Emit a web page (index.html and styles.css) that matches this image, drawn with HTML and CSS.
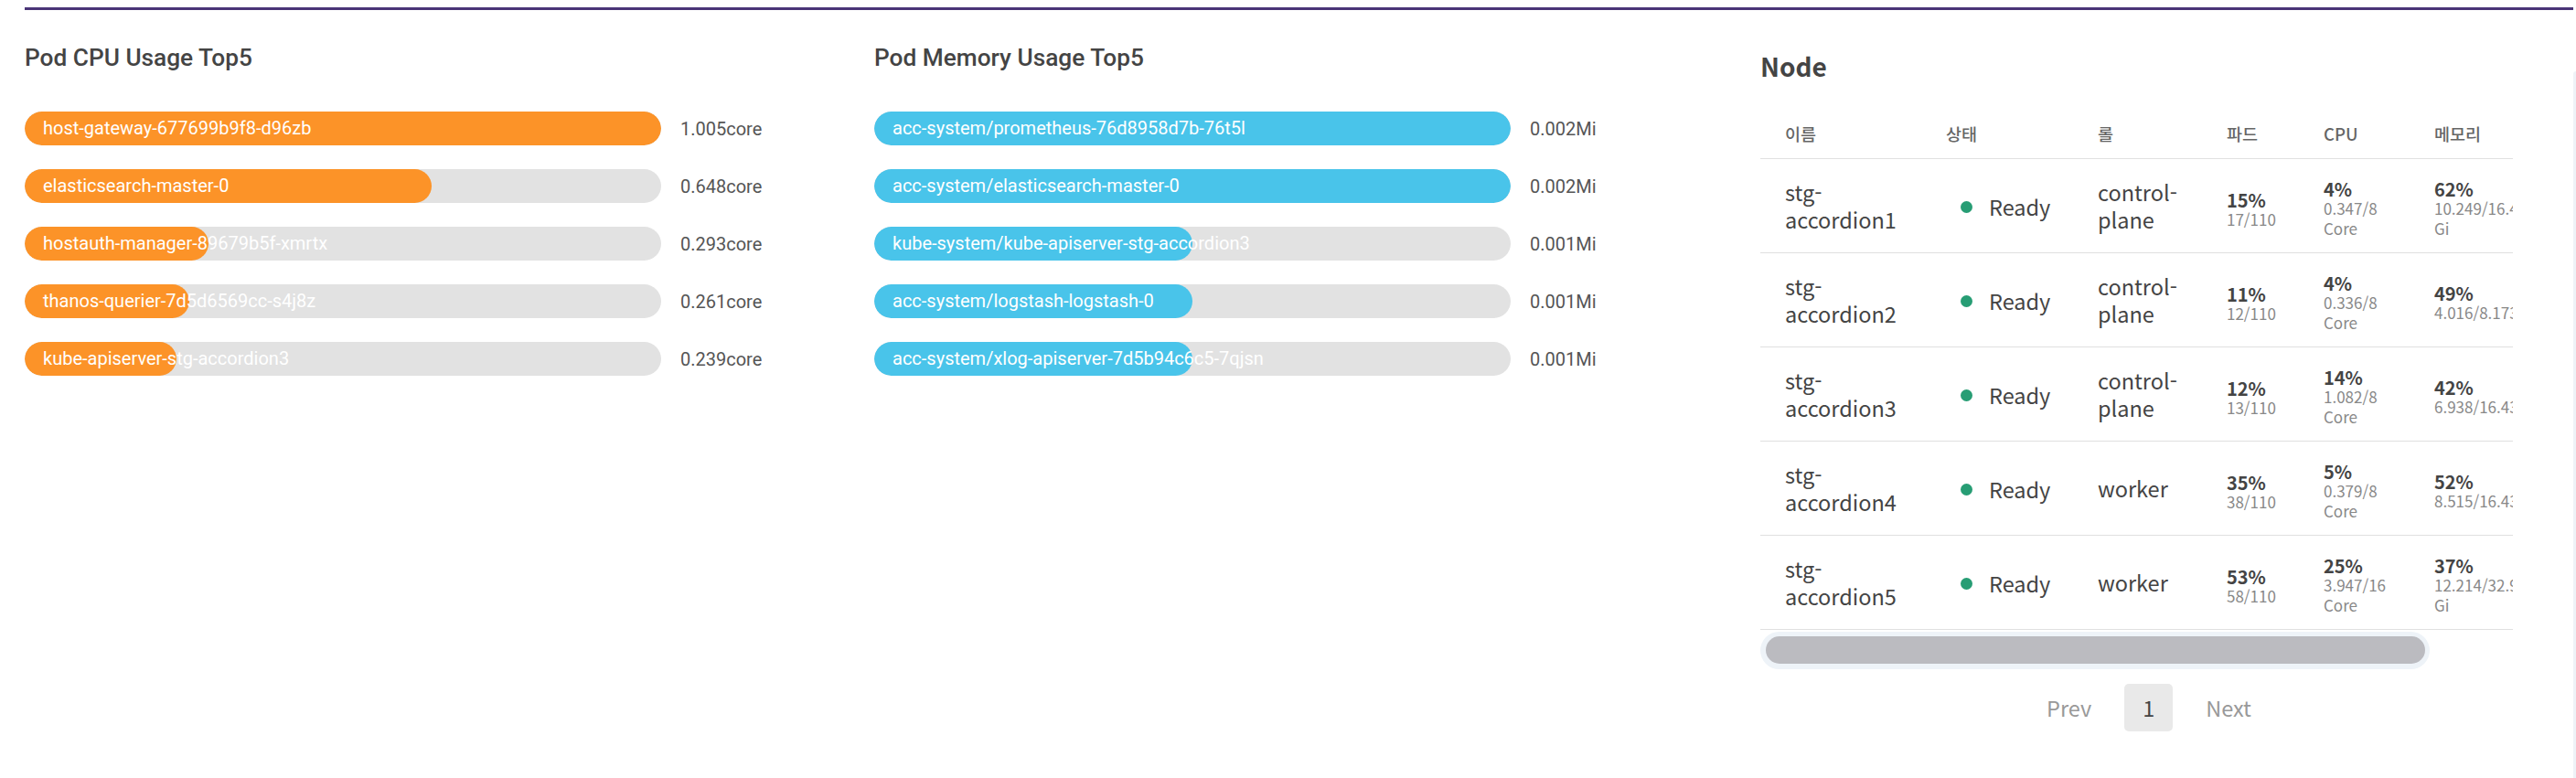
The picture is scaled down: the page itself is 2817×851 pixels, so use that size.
FILE: index.html
```html
<!DOCTYPE html>
<html lang="ko">
<head>
<meta charset="utf-8">
<title>Dashboard</title>
<link rel="stylesheet" href="styles.css">
</head>
<body>
<div class="page">
  <main class="main">
    <div class="topline"></div>
    <div class="grid">
      <section class="panel">
        <h2 class="title">Pod CPU Usage Top5</h2>
        <div class="bars">
          <div class="bar-row">
            <div class="track"><div class="fill cpu" style="width:100%"></div><span class="label">host-gateway-677699b9f8-d96zb</span></div>
            <span class="value">1.005core</span>
          </div>
          <div class="bar-row">
            <div class="track"><div class="fill cpu" style="width:64%"></div><span class="label">elasticsearch-master-0</span></div>
            <span class="value">0.648core</span>
          </div>
          <div class="bar-row">
            <div class="track"><div class="fill cpu" style="width:28.9%"></div><span class="label">hostauth-manager-89679b5f-xmrtx</span></div>
            <span class="value">0.293core</span>
          </div>
          <div class="bar-row">
            <div class="track"><div class="fill cpu" style="width:25.9%"></div><span class="label">thanos-querier-7d5d6569cc-s4j8z</span></div>
            <span class="value">0.261core</span>
          </div>
          <div class="bar-row">
            <div class="track"><div class="fill cpu" style="width:23.8%"></div><span class="label">kube-apiserver-stg-accordion3</span></div>
            <span class="value">0.239core</span>
          </div>
        </div>
      </section>

      <section class="panel">
        <h2 class="title">Pod Memory Usage Top5</h2>
        <div class="bars">
          <div class="bar-row">
            <div class="track"><div class="fill mem" style="width:100%"></div><span class="label">acc-system/prometheus-76d8958d7b-76t5l</span></div>
            <span class="value">0.002Mi</span>
          </div>
          <div class="bar-row">
            <div class="track"><div class="fill mem" style="width:100%"></div><span class="label">acc-system/elasticsearch-master-0</span></div>
            <span class="value">0.002Mi</span>
          </div>
          <div class="bar-row">
            <div class="track"><div class="fill mem" style="width:50%"></div><span class="label">kube-system/kube-apiserver-stg-accordion3</span></div>
            <span class="value">0.001Mi</span>
          </div>
          <div class="bar-row">
            <div class="track"><div class="fill mem" style="width:50%"></div><span class="label">acc-system/logstash-logstash-0</span></div>
            <span class="value">0.001Mi</span>
          </div>
          <div class="bar-row">
            <div class="track"><div class="fill mem" style="width:50%"></div><span class="label">acc-system/xlog-apiserver-7d5b94c6c5-7qjsn</span></div>
            <span class="value">0.001Mi</span>
          </div>
        </div>
      </section>

      <section class="node">
        <h2 class="node-title">Node</h2>
        <div class="table-view">
          <table class="node-table">
            <colgroup>
              <col class="c-name"><col class="c-status"><col class="c-role"><col class="c-pod"><col class="c-cpu"><col class="c-mem">
            </colgroup>
            <thead>
              <tr><th>이름</th><th>상태</th><th>롤</th><th>파드</th><th>CPU</th><th>메모리</th></tr>
            </thead>
            <tbody>
              <tr>
                <td>stg-accordion1</td>
                <td><span class="status"><i class="dot"></i>Ready</span></td>
                <td>control-plane</td>
                <td class="num pod"><div class="pct">15%</div><div class="sub">17/110</div></td>
                <td class="num"><div class="pct">4%</div><div class="sub">0.347/8 Core</div></td>
                <td class="num"><div class="pct">62%</div><div class="sub">10.249/16.43 Gi</div></td>
              </tr>
              <tr>
                <td>stg-accordion2</td>
                <td><span class="status"><i class="dot"></i>Ready</span></td>
                <td>control-plane</td>
                <td class="num pod"><div class="pct">11%</div><div class="sub">12/110</div></td>
                <td class="num"><div class="pct">4%</div><div class="sub">0.336/8 Core</div></td>
                <td class="num"><div class="pct">49%</div><div class="sub">4.016/8.173 Gi</div></td>
              </tr>
              <tr>
                <td>stg-accordion3</td>
                <td><span class="status"><i class="dot"></i>Ready</span></td>
                <td>control-plane</td>
                <td class="num pod"><div class="pct">12%</div><div class="sub">13/110</div></td>
                <td class="num"><div class="pct">14%</div><div class="sub">1.082/8 Core</div></td>
                <td class="num"><div class="pct">42%</div><div class="sub">6.938/16.43 Gi</div></td>
              </tr>
              <tr>
                <td>stg-accordion4</td>
                <td><span class="status"><i class="dot"></i>Ready</span></td>
                <td>worker</td>
                <td class="num pod"><div class="pct">35%</div><div class="sub">38/110</div></td>
                <td class="num"><div class="pct">5%</div><div class="sub">0.379/8 Core</div></td>
                <td class="num"><div class="pct">52%</div><div class="sub">8.515/16.43 Gi</div></td>
              </tr>
              <tr>
                <td>stg-accordion5</td>
                <td><span class="status"><i class="dot"></i>Ready</span></td>
                <td>worker</td>
                <td class="num pod"><div class="pct">53%</div><div class="sub">58/110</div></td>
                <td class="num"><div class="pct">25%</div><div class="sub">3.947/16 Core</div></td>
                <td class="num"><div class="pct">37%</div><div class="sub">12.214/32.93 Gi</div></td>
              </tr>
            </tbody>
          </table>
        </div>
        <div class="hscroll"><div class="thumb"></div></div>
        <nav class="pager">
          <span class="pg-link">Prev</span>
          <span class="pg-num">1</span>
          <span class="pg-link">Next</span>
        </nav>
      </section>
    </div>
  </main>
  <aside class="edge"></aside>
</div>
</body>
</html>
```

FILE: styles.css
```css
* { box-sizing: border-box; }
html, body { margin: 0; padding: 0; background: #fff; }
body { font-family: Roboto, "Liberation Sans", sans-serif; color: #444; }

.page {
  display: flex;
  width: 2817px;
  height: 851px;
  overflow: hidden;
}
.main {
  flex: 1;
  padding: 8px 0 0 27px;
  min-width: 0;
}
.edge {
  width: 3px;
  margin-top: 78px;
  background: #eef2f7;
  border-top-left-radius: 3px;
}
.topline {
  height: 3px;
  background: #4a3577;
}

.grid {
  display: grid;
  grid-template-columns: 929px 969px 1fr;
  align-items: start;
}

/* bar panels */
.title {
  margin: 36px 0 0 0;
  font-family: Roboto, sans-serif;
  font-size: 26.25px;
  line-height: 33px;
  font-weight: 500;
  color: #444;
}
.bars {
  margin-top: 42px;
  display: flex;
  flex-direction: column;
  gap: 26px;
}
.bar-row {
  display: flex;
  align-items: center;
  gap: 21px;
}
.track {
  width: 696px;
  height: 37px;
  display: grid;
  background: #e2e2e2;
  border-radius: 19px;
  overflow: hidden;
}
.fill, .label { grid-area: 1 / 1; }
.fill {
  height: 37px;
  border-radius: 19px;
}
.fill.cpu { background: #fc9328; }
.fill.mem { background: #49c4ea; }
.label {
  padding-left: 20px;
  line-height: 37px;
  font-size: 20px;
  color: #fff;
  white-space: nowrap;
}
.value {
  font-size: 20px;
  color: #555;
  white-space: nowrap;
}

/* node panel */
.node {
  width: 850px;
  font-family: "Noto Sans CJK KR", "Noto Sans", sans-serif;
}
.node-title {
  margin: 44px 0 0 0;
  font-size: 28px;
  line-height: 34px;
  font-weight: 700;
  color: #444;
}
.table-view {
  margin-top: 30px;
  width: 823px;
  overflow: hidden;
}
.node-table {
  border-collapse: collapse;
  table-layout: fixed;
  width: 850px;
}
.c-name { width: 176px; }
.c-status { width: 166px; }
.c-role { width: 141px; }
.c-pod { width: 106px; }
.c-cpu { width: 121px; }
.c-mem { width: 140px; }

.node-table th {
  height: 54px;
  padding: 0 0 0 27px;
  text-align: left;
  vertical-align: middle;
  font-size: 18.5px;
  font-weight: 500;
  color: #666;
  border-bottom: 1px solid #e0e0e0;
}
.node-table td {
  height: 103px;
  padding: 0 0 0 27px;
  vertical-align: middle;
  font-size: 23.5px;
  line-height: 30px;
  color: #444;
  border-bottom: 1px solid #e0e0e0;
}
.node-table td.num { padding-top: 7px; }
.node-table td.pod { padding-top: 9px; }
.status {
  display: inline-flex;
  align-items: center;
  margin-left: 16px;
  white-space: nowrap;
}
.dot {
  width: 13px;
  height: 13px;
  border-radius: 50%;
  background: #279d74;
  margin-right: 18px;
}
.pct {
  font-size: 20px;
  line-height: 21.5px;
  font-weight: 700;
  color: #444;
}
.sub {
  font-size: 17px;
  line-height: 21.5px;
  color: #888;
}

.hscroll {
  margin-top: 2px;
  width: 732px;
  height: 41px;
  padding: 5px 5px 6px 6px;
  background: #eef3f8;
  border-radius: 21px;
}
.thumb {
  height: 30px;
  background: #bbbbc0;
  border-radius: 15px;
}

.pager {
  margin-top: 16px;
  display: flex;
  justify-content: center;
  align-items: center;
  gap: 36px;
  font-size: 23.5px;
}
.pg-link { color: #999; }
.pg-num {
  width: 53px;
  height: 52px;
  display: flex;
  align-items: center;
  justify-content: center;
  background: #e9e9e9;
  border-radius: 5px;
  color: #444;
}
```
